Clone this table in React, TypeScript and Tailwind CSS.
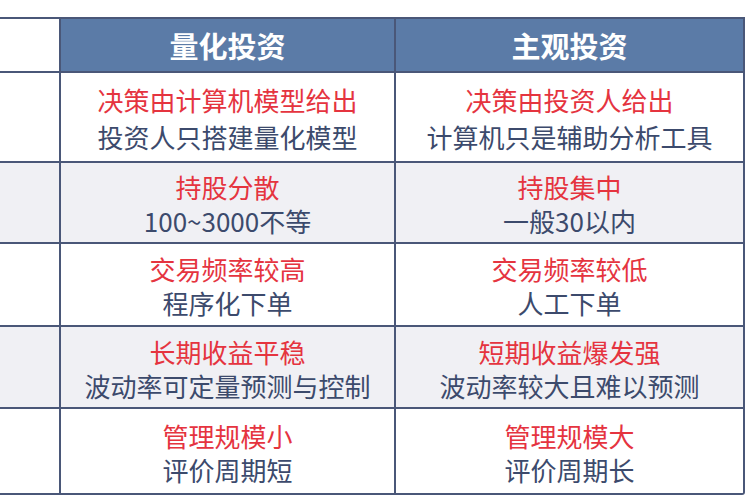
const rows = [
  {
    h: "h-[90px]",
    bg: "bg-white",
    gap: "gap-[5px]",
    left: ["决策由计算机模型给出", "投资人只搭建量化模型"],
    right: ["决策由投资人给出", "计算机只是辅助分析工具"],
  },
  {
    h: "h-[81px]",
    bg: "bg-[#f0f0f4]",
    gap: "gap-[2px]",
    left: ["持股分散", "100~3000不等"],
    right: ["持股集中", "一般30以内"],
  },
  {
    h: "h-[83px]",
    bg: "bg-white",
    gap: "gap-[2px]",
    left: ["交易频率较高", "程序化下单"],
    right: ["交易频率较低", "人工下单"],
  },
  {
    h: "h-[82px]",
    bg: "bg-[#f0f0f4]",
    gap: "gap-[2px]",
    left: ["长期收益平稳", "波动率可定量预测与控制"],
    right: ["短期收益爆发强", "波动率较大且难以预测"],
  },
  {
    h: "h-[84px]",
    bg: "bg-white",
    gap: "gap-[2px]",
    left: ["管理规模小", "评价周期短"],
    right: ["管理规模大", "评价周期长"],
  },
]

function Cell({ lines, gap }: { lines: string[]; gap: string }) {
  return (
    <div className={`flex flex-col items-center justify-center ${gap} pt-[3px] whitespace-nowrap`}>
      <span className="block h-[32px] leading-[32px] text-[#e5343f]">{lines[0]}</span>
      <span className="block h-[32px] leading-[32px] text-[#3c4a6c]">{lines[1]}</span>
    </div>
  )
}

export default function App() {
  return (
    <div
      className="h-[500px] w-[750px] overflow-hidden bg-white pt-[17px]"
      style={{ fontFamily: '"Noto Sans CJK SC", "Noto Sans", sans-serif' }}
    >
      <div className="w-[745px] overflow-hidden rounded-br-[3px] border-t-2 border-r-2 border-b-2 border-[#4a5778] text-[26px]">
        {/* header */}
        <div className="grid h-[54px] grid-cols-[61px_335px_1fr] border-b-2 border-[#4a5778]">
          <div className="border-r-2 border-[#4a5778] bg-white" />
          <div className="flex items-center justify-center border-r-2 border-[#4a5778] bg-[#5b7ba7] text-[29px] leading-none font-bold text-white">
            量化投资
          </div>
          <div className="flex items-center justify-center bg-[#5b7ba7] text-[29px] leading-none font-bold text-white">
            主观投资
          </div>
        </div>

        {rows.map((r, i) => (
          <div
            key={i}
            className={`grid grid-cols-[61px_335px_1fr] ${r.h} ${r.bg} ${
              i < rows.length - 1 ? "border-b-2 border-[#4a5778]" : ""
            }`}
          >
            <div className="border-r-2 border-[#4a5778]" />
            <div className="flex items-center justify-center border-r-2 border-[#4a5778]">
              <Cell lines={r.left} gap={r.gap} />
            </div>
            <div className="flex items-center justify-center">
              <Cell lines={r.right} gap={r.gap} />
            </div>
          </div>
        ))}
      </div>
    </div>
  )
}
